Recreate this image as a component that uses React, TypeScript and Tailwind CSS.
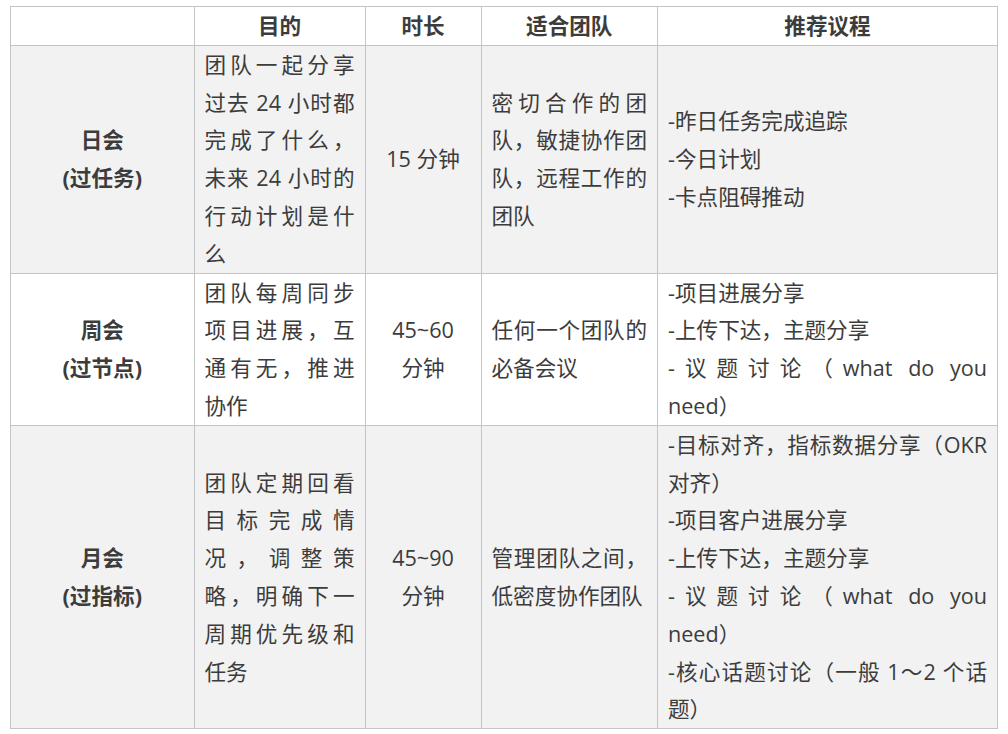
import React from "react";

const font = {
  fontFamily: '"Open Sans", "Noto Sans CJK SC", sans-serif',
};

type Line = { text: string; full?: boolean };

type Row = {
  name: string;
  sub: string;
  goal: string;
  time: string[];
  team: string;
  agenda: Line[];
  bg: string;
};

const rows: Row[] = [
  {
    name: "日会",
    sub: "(过任务)",
    goal: "团队一起分享过去 24 小时都完成了什么，未来 24 小时的行动计划是什么",
    time: ["15 分钟"],
    team: "密切合作的团队，敏捷协作团队，远程工作的团队",
    agenda: [
      { text: "-昨日任务完成追踪" },
      { text: "-今日计划" },
      { text: "-卡点阻碍推动" },
    ],
    bg: "bg-[#f2f2f2]",
  },
  {
    name: "周会",
    sub: "(过节点)",
    goal: "团队每周同步项目进展，互通有无，推进协作",
    time: ["45~60", "分钟"],
    team: "任何一个团队的必备会议",
    agenda: [
      { text: "-项目进展分享" },
      { text: "-上传下达，主题分享" },
      { text: "-议题讨论（what do you", full: true },
      { text: "need）" },
    ],
    bg: "bg-white",
  },
  {
    name: "月会",
    sub: "(过指标)",
    goal: "团队定期回看目标完成情况，调整策略，明确下一周期优先级和任务",
    time: ["45~90", "分钟"],
    team: "管理团队之间，低密度协作团队",
    agenda: [
      { text: "-目标对齐，指标数据分享（OKR对齐）" },
      { text: "-项目客户进展分享" },
      { text: "-上传下达，主题分享" },
      { text: "-议题讨论（what do you", full: true },
      { text: "need）" },
      { text: "-核心话题讨论（一般 1～2 个话题）" },
    ],
    bg: "bg-[#f2f2f2]",
  },
];

const cell =
  "border border-[#c4c4c4] px-[10px] py-0 align-middle text-[21.6px] leading-[37.8px] text-[#3c3c3c]";

export default function App() {
  return (
    <div className="bg-white min-h-[734px] w-[1008px] pt-[6px] pl-[10px]" style={font}>
      <table className="w-[987px] table-fixed border-collapse">
        <colgroup>
          <col className="w-[183.5px]" />
          <col className="w-[171px]" />
          <col className="w-[116px]" />
          <col className="w-[176.5px]" />
          <col className="w-[340px]" />
        </colgroup>
        <thead>
          <tr className="bg-white">
            <th className={`${cell} font-bold text-center`}></th>
            <th className={`${cell} font-bold text-center`}>目的</th>
            <th className={`${cell} font-bold text-center`}>时长</th>
            <th className={`${cell} font-bold text-center`}>适合团队</th>
            <th className={`${cell} font-bold text-center`}>推荐议程</th>
          </tr>
        </thead>
        <tbody>
          {rows.map((r) => (
            <tr key={r.name} className={r.bg}>
              <td className={`${cell} text-center font-bold`}>
                {r.name}
                <br />
                {r.sub}
              </td>
              <td className={`${cell} text-justify`}>{r.goal}</td>
              <td className={`${cell} text-center`}>
                {r.time.map((t) => (
                  <p key={t}>{t}</p>
                ))}
              </td>
              <td className={`${cell} text-justify`}>{r.team}</td>
              <td className={`${cell} text-justify`}>
                {r.agenda.map((a, i) => (
                  <p
                    key={i}
                    className={a.full ? "[text-align-last:justify]" : ""}
                  >
                    {a.text}
                  </p>
                ))}
              </td>
            </tr>
          ))}
        </tbody>
      </table>
    </div>
  );
}
